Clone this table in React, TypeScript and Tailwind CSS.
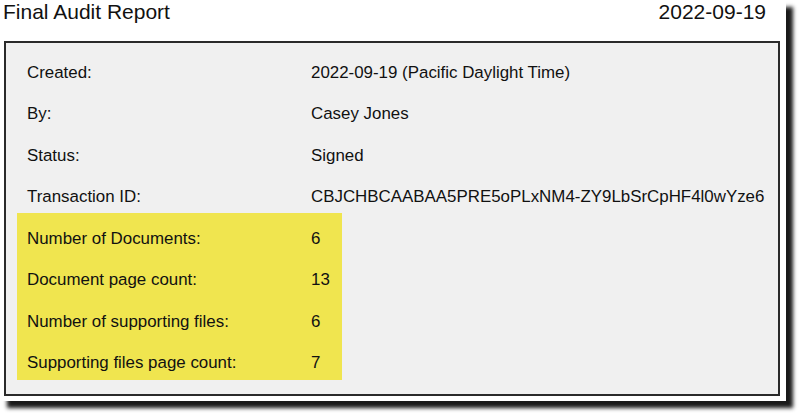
const rows = [
  { label: 'Created:', value: '2022-09-19 (Pacific Daylight Time)' },
  { label: 'By:', value: 'Casey Jones' },
  { label: 'Status:', value: 'Signed' },
  { label: 'Transaction ID:', value: 'CBJCHBCAABAA5PRE5oPLxNM4-ZY9LbSrCpHF4l0wYze6' },
]

const counts = [
  { label: 'Number of Documents:', value: '6' },
  { label: 'Document page count:', value: '13' },
  { label: 'Number of supporting files:', value: '6' },
  { label: 'Supporting files page count:', value: '7' },
]

function Row({ label, value }: { label: string; value: string }) {
  return (
    <div className="flex items-center h-[41.5px] whitespace-nowrap">
      <span className="w-[284px] shrink-0">{label}</span>
      <span>{value}</span>
    </div>
  )
}

export default function App() {
  return (
    <div className="w-[800px] h-[413px] bg-white overflow-hidden font-['Liberation_Sans',Arial,sans-serif] text-[#111]">
      {/* page sheet with drop shadow */}
      <div className="w-[786px] h-[401px] bg-white shadow-[7px_7px_4px_rgba(0,0,0,0.9)]">
        {/* Encabezado */}
        <div className="flex justify-between pl-[3px] pr-[20px] text-[21px] leading-[24px]">
          <span>Final Audit Report</span>
          <span>2022-09-19</span>
        </div>

        {/* Detalles */}
        <div className="ml-[4px] mt-[17px] w-[776px] h-[355px] border-2 border-[#2a2a2a] bg-[#f0f0f0] pl-[11px] pt-[8.5px] text-[16.9px]">
          <div className="pl-[10px]">
            {rows.map(r => (
              <Row key={r.label} label={r.label} value={r.value} />
            ))}
          </div>
          <div className="-mt-[4.5px] w-[325px] h-[167px] bg-[#f0e54f] pl-[10px] pt-[4.5px]">
            {counts.map(r => (
              <Row key={r.label} label={r.label} value={r.value} />
            ))}
          </div>
        </div>
      </div>
    </div>
  )
}
